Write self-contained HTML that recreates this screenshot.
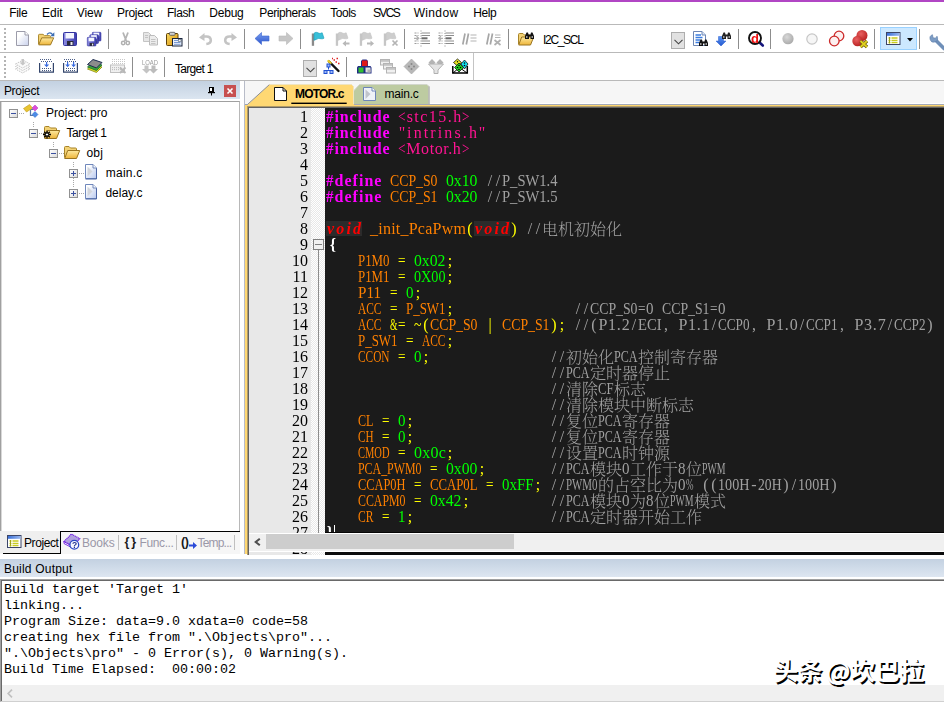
<!DOCTYPE html>
<html lang="zh"><head><meta charset="utf-8"><title>uVision</title><style>
*{margin:0;padding:0;box-sizing:border-box}
html,body{width:944px;height:704px;overflow:hidden;background:#fff}
body{position:relative;font-family:"Liberation Sans","Noto Sans CJK SC",sans-serif;font-size:12px;color:#000}
.a{position:absolute}
.ui{position:absolute;white-space:pre;font-size:12px;line-height:14px}
.sep{position:absolute;width:1px;background:#8d8d8d}
.hl{position:absolute;height:1px}
.t{position:absolute;white-space:pre;font:16px/16px "Liberation Serif",serif;height:16px;transform-origin:0 0}
.tb{font-weight:bold}
.tk{font-weight:bold;font-style:italic;background:#2b2b2b;height:15px}
.c{position:absolute;white-space:pre;font:300 16px/16px "Noto Serif CJK SC",serif;height:16px}
.ln{position:absolute;white-space:pre;font:16px/16px "Liberation Serif",serif;height:16px;right:636px;color:#000;text-align:right}
.bo{position:absolute;left:4px;white-space:pre;font:13.333px/16px "Liberation Mono",monospace;color:#000}
svg{position:absolute;overflow:visible}
.s0{transform:scaleX(0.938)}.s1{transform:scaleX(0.831)}.s2{transform:scaleX(0.861)}.s3{transform:scaleX(0.984)}.s4{transform:scaleX(0.911)}.s5{transform:scaleX(0.805)}.s6{transform:scaleX(0.886)}.s7{transform:scaleX(0.944)}.s8{transform:scaleX(0.714)}.s9{transform:scaleX(0.808)}.s10{transform:scaleX(0.603)}.s11{transform:scaleX(0.866)}.s12{transform:scaleX(0.912)}.s13{transform:scaleX(0.824)}.s14{transform:scaleX(0.709)}.s15{transform:scaleX(0.755)}.s16{transform:scaleX(0.792)}.s17{transform:scaleX(0.758)}.s18{transform:scaleX(0.697)}.s19{transform:scaleX(0.656)}.s20{transform:scaleX(0.744)}.s21{transform:scaleX(0.615)}.s22{transform:scaleX(0.774)}.s23{transform:scaleX(0.797)}.s24{transform:scaleX(0.932)}.s25{transform:scaleX(0.681)}.s26{transform:scaleX(0.563)}.s27{transform:scaleX(0.853)}.s28{transform:scaleX(0.742)}.s29{transform:scaleX(0.726)}
</style></head><body>
<div class="a" style="left:0;top:0;width:944px;height:2px;background:#b146c4"></div>
<div class="ui" style="left:9.3px;top:6px;letter-spacing:-0.36px">File</div>
<div class="ui" style="left:41.9px;top:6px;letter-spacing:0.03px">Edit</div>
<div class="ui" style="left:76.8px;top:6px;letter-spacing:-0.08px">View</div>
<div class="ui" style="left:117.1px;top:6px;letter-spacing:-0.32px">Project</div>
<div class="ui" style="left:166.9px;top:6px;letter-spacing:-0.37px">Flash</div>
<div class="ui" style="left:209.2px;top:6px;letter-spacing:-0.19px">Debug</div>
<div class="ui" style="left:259.3px;top:6px;letter-spacing:-0.40px">Peripherals</div>
<div class="ui" style="left:330.3px;top:6px;letter-spacing:-0.49px">Tools</div>
<div class="ui" style="left:372.9px;top:6px;letter-spacing:-1.57px">SVCS</div>
<div class="ui" style="left:413.7px;top:6px;letter-spacing:0.34px">Window</div>
<div class="ui" style="left:473.3px;top:6px;letter-spacing:-0.42px">Help</div>
<div class="hl" style="left:0;top:24px;width:944px;background:#b9b9b9"></div>
<div class="hl" style="left:0;top:52px;width:944px;background:#b9b9b9"></div>
<div class="hl" style="left:0;top:80px;width:944px;background:#b9b9b9"></div>
<div class="a" style="left:473px;top:53px;width:1px;height:27px;background:#c4c4c4"></div>
<div class="a" style="left:4px;top:28px;width:2px;height:22px;background:repeating-linear-gradient(to bottom,#b4b4b4 0 2px,transparent 2px 4px)"></div>
<div class="a" style="left:4px;top:56px;width:2px;height:22px;background:repeating-linear-gradient(to bottom,#b4b4b4 0 2px,transparent 2px 4px)"></div>
<div class="sep" style="left:108px;top:29px;height:20px"></div>
<div class="sep" style="left:188px;top:29px;height:20px"></div>
<div class="sep" style="left:244px;top:29px;height:20px"></div>
<div class="sep" style="left:300px;top:29px;height:20px"></div>
<div class="sep" style="left:404px;top:29px;height:20px"></div>
<div class="sep" style="left:508px;top:29px;height:20px"></div>
<div class="sep" style="left:738px;top:29px;height:20px"></div>
<div class="sep" style="left:770px;top:29px;height:20px"></div>
<div class="sep" style="left:874px;top:29px;height:20px"></div>
<div class="sep" style="left:919px;top:29px;height:20px"></div>
<div class="sep" style="left:132px;top:57px;height:20px"></div>
<div class="sep" style="left:164px;top:57px;height:20px"></div>
<div class="sep" style="left:346px;top:57px;height:20px"></div>
<div class="ui" style="left:174.9px;top:62px;letter-spacing:-0.69px">Target 1</div>
<div class="ui" style="left:543.0px;top:33px;letter-spacing:-1.31px">I2C_SCL</div>
<div class="a" style="left:303px;top:60px;width:14px;height:17px;background:#e1e1e1;border:1px solid #adadad"></div>
<svg style="left:305.5px;top:67px" width="9" height="6" viewBox="0 0 9 6"><path d="M0.5 0.8 L4.5 4.8 L8.5 0.8" fill="none" stroke="#444" stroke-width="1.1"/></svg>
<div class="a" style="left:671px;top:32px;width:14px;height:17px;background:#e1e1e1;border:1px solid #adadad"></div>
<svg style="left:673.5px;top:39px" width="9" height="6" viewBox="0 0 9 6"><path d="M0.5 0.8 L4.5 4.8 L8.5 0.8" fill="none" stroke="#444" stroke-width="1.1"/></svg>
<div class="a" style="left:880px;top:27px;width:37px;height:23px;background:#cce8ff;border:1px solid #99d1ff"></div>
<svg style="left:906.500px;top:38px" width="6" height="3.500" viewBox="0 0 6 3.500"><path d="M0 0H6L3 3.500Z" fill="#000"/></svg>
<div class="a" style="left:0;top:81px;width:240px;height:18px;background:linear-gradient(#c3d1e1,#dbe5f0)"></div>
<div class="ui" style="left:3.9px;top:84px;letter-spacing:-0.29px">Project</div>
<div class="a" style="left:224px;top:85px;width:12px;height:12px;background:#c75050"></div>
<svg style="left:227px;top:88px" width="6" height="6" viewBox="0 0 6 6"><path d="M0.5 0.5L5.5 5.5M5.5 0.5L0.5 5.5" stroke="#fff" stroke-width="1.6"/></svg>
<svg style="left:207px;top:86px" width="9" height="10" viewBox="0 0 9 10"><rect x="2.500" y="1.500" width="4" height="4" fill="#fff" stroke="#000"/><rect x="5" y="1" width="2" height="5" fill="#000"/><rect x="1" y="6" width="7" height="1.200" fill="#000"/><rect x="4" y="7" width="1" height="2.500" fill="#000"/></svg>
<div class="a" style="left:0;top:101px;width:240px;height:430px;border:1px solid #a0a0a0;border-bottom:none;border-right-color:#b8b8b8;background:#fff"></div>
<div class="a" style="left:1px;top:102px;width:1px;height:429px;background:#d8d8d8"></div>
<div class="a" style="left:9px;top:109px;width:9px;height:9px;border:1px solid #919191;background:linear-gradient(135deg,#fff,#dcdcdc)"></div>
<div class="a" style="left:11px;top:113px;width:5px;height:1px;background:#3a50a0"></div>
<div class="ui" style="left:46.0px;top:106px;letter-spacing:0.01px">Project: pro</div>
<div class="a" style="left:29px;top:129px;width:9px;height:9px;border:1px solid #919191;background:linear-gradient(135deg,#fff,#dcdcdc)"></div>
<div class="a" style="left:31px;top:133px;width:5px;height:1px;background:#3a50a0"></div>
<div class="ui" style="left:66.5px;top:126px;letter-spacing:-0.42px">Target 1</div>
<div class="a" style="left:49px;top:149px;width:9px;height:9px;border:1px solid #919191;background:linear-gradient(135deg,#fff,#dcdcdc)"></div>
<div class="a" style="left:51px;top:153px;width:5px;height:1px;background:#3a50a0"></div>
<div class="ui" style="left:86.4px;top:146px;letter-spacing:0.30px">obj</div>
<div class="a" style="left:69px;top:169px;width:9px;height:9px;border:1px solid #919191;background:linear-gradient(135deg,#fff,#dcdcdc)"></div>
<div class="a" style="left:71px;top:173px;width:5px;height:1px;background:#3a50a0"></div>
<div class="a" style="left:73px;top:171px;width:1px;height:5px;background:#3a50a0"></div>
<div class="ui" style="left:105.8px;top:166px;letter-spacing:0.21px">main.c</div>
<div class="a" style="left:69px;top:189px;width:9px;height:9px;border:1px solid #919191;background:linear-gradient(135deg,#fff,#dcdcdc)"></div>
<div class="a" style="left:71px;top:193px;width:5px;height:1px;background:#3a50a0"></div>
<div class="a" style="left:73px;top:191px;width:1px;height:5px;background:#3a50a0"></div>
<div class="ui" style="left:105.4px;top:186px;letter-spacing:0.01px">delay.c</div>
<div class="a" style="left:19px;top:113px;width:5px;height:1px;background:repeating-linear-gradient(to right,#a8a8a8 0 1px,transparent 1px 2px)"></div>
<div class="a" style="left:39px;top:133px;width:5px;height:1px;background:repeating-linear-gradient(to right,#a8a8a8 0 1px,transparent 1px 2px)"></div>
<div class="a" style="left:59px;top:153px;width:5px;height:1px;background:repeating-linear-gradient(to right,#a8a8a8 0 1px,transparent 1px 2px)"></div>
<div class="a" style="left:79px;top:173px;width:5px;height:1px;background:repeating-linear-gradient(to right,#a8a8a8 0 1px,transparent 1px 2px)"></div>
<div class="a" style="left:79px;top:193px;width:5px;height:1px;background:repeating-linear-gradient(to right,#a8a8a8 0 1px,transparent 1px 2px)"></div>
<div class="a" style="left:33px;top:122px;width:1px;height:6px;background:repeating-linear-gradient(to bottom,#a8a8a8 0 1px,transparent 1px 2px)"></div>
<div class="a" style="left:53px;top:142px;width:1px;height:6px;background:repeating-linear-gradient(to bottom,#a8a8a8 0 1px,transparent 1px 2px)"></div>
<div class="a" style="left:73px;top:162px;width:1px;height:6px;background:repeating-linear-gradient(to bottom,#a8a8a8 0 1px,transparent 1px 2px)"></div>
<div class="a" style="left:73px;top:178px;width:1px;height:10px;background:repeating-linear-gradient(to bottom,#a8a8a8 0 1px,transparent 1px 2px)"></div>
<div class="a" style="left:0;top:531px;width:240px;height:23px;background:#f6f6f6"></div>
<div class="a" style="left:0;top:531px;width:60px;height:22px;background:#efefef"></div>
<div class="a" style="left:60px;top:531px;width:180px;height:1px;background:#000"></div>
<div class="a" style="left:60px;top:531px;width:1px;height:23px;background:#000"></div>
<div class="a" style="left:3px;top:553px;width:58px;height:1px;background:#000"></div>
<div class="ui" style="left:24.0px;top:536px;letter-spacing:-0.41px">Project</div>
<div class="ui" style="left:82.0px;top:536px;letter-spacing:-0.17px;color:#9a98a8">Books</div>
<div class="ui" style="left:139.5px;top:536px;letter-spacing:-0.38px;color:#9a98a8">Func...</div>
<div class="ui" style="left:197.5px;top:536px;letter-spacing:-0.81px;color:#9a98a8">Temp...</div>
<div class="a" style="left:118px;top:535px;width:1px;height:15px;background:#c0c0c0"></div>
<div class="a" style="left:176px;top:535px;width:1px;height:15px;background:#c0c0c0"></div>
<div class="a" style="left:234px;top:535px;width:1px;height:15px;background:#c0c0c0"></div>
<div class="ui" style="left:124.500px;top:535px;font-size:12.500px;font-weight:bold;letter-spacing:1.800px;color:#1a1a1a">{}</div>
<div class="ui" style="left:181px;top:535px;font-size:12.500px;font-weight:bold;letter-spacing:-0.500px;color:#1a1a1a">()</div>
<svg style="left:189px;top:542px" width="8" height="7" viewBox="0 0 8 7"><path d="M0 2.5h4v-2.5l4 3.5l-4 3.5v-2.5h-4z" fill="#2a4ad8"/></svg>
<div class="a" style="left:245px;top:81px;width:699px;height:24px;background:#f6f6f6"></div>
<div class="a" style="left:244px;top:81px;width:1px;height:474px;background:#b8bcc8"></div>
<svg style="left:245px;top:81px" width="200" height="26" viewBox="0 0 200 26"><path d="M108.500 23.500V10L114.500 3.500H182L184 5.500V23.500Z" fill="#bdcba1" stroke="#d2d6cc" stroke-width="1"/><path d="M184 5.500V23.500" stroke="#b4b4b4" stroke-width="1.400"/><path d="M2.500 24L24.500 3.500H106.500L108.500 5.500V24Z" fill="#ffd873"/><path d="M2.500 23.500L24.500 3.500" fill="none" stroke="#8e8e8e" stroke-width="1"/><path d="M24.500 3.500H106.500L108.500 5.500V23" fill="none" stroke="#efe4c0" stroke-width="1"/><path d="M29.500 6.500h8.500l3.500 3.500v9.500h-12z" fill="#fff" stroke="#111" stroke-width="1"/><path d="M38 6.500v3.500h3.500" fill="none" stroke="#111" stroke-width="1"/><path d="M118.500 6.500h8.500l3.500 3.500v9.500h-12z" fill="#eef2f8" stroke="#6c84b8" stroke-width="1"/><path d="M127 6.500v3.500h3.500" fill="#fff" stroke="#6c84b8" stroke-width="1"/><path d="M120.500 8.500L125.500 13L120.500 18z" fill="#c0c4cc"/><rect x="46.300" y="21.600" width="55.400" height="1.500" fill="#000"/></svg>
<div class="ui" style="left:295.0px;top:87px;letter-spacing:-0.82px;font-weight:bold">MOTOR.c</div>
<div class="ui" style="left:384.5px;top:87px;letter-spacing:-0.22px">main.c</div>
<div class="a" style="left:245px;top:104px;width:699px;height:450px;background:#ffd873"></div>
<div class="a" style="left:430px;top:103px;width:514px;height:1px;background:#fff"></div>
<div class="a" style="left:354px;top:104px;width:590px;height:1px;background:#a4aab8"></div>
<div class="a" style="left:245px;top:104px;width:3px;height:1px;background:#9aa2b4"></div>
<div class="a" style="left:247px;top:106px;width:697px;height:449px;background:#b09a66"></div>
<div class="a" style="left:248px;top:107px;width:696px;height:448px;background:#636363"></div>
<div class="a" style="left:249px;top:108px;width:62px;height:447px;background:#e8e8e8"></div>
<div class="a" style="left:311px;top:108px;width:14px;height:447px;background:repeating-conic-gradient(#fff 0 25%,#e8e8e8 0 50%) 0 0/2px 2px"></div>
<div class="a" style="left:325px;top:108px;width:619px;height:447px;background:#1b1b1b"></div>
<div class="a" style="left:318px;top:250px;width:1px;height:283px;background:#8c8c8c"></div>
<div class="a" style="left:313px;top:239px;width:11px;height:11px;border:1px solid #808080;background:#f1f1f1"></div>
<div class="a" style="left:315px;top:244px;width:7px;height:1px;background:#808080"></div>
<div class="a" style="left:0;top:0;width:944px;height:555px;overflow:hidden;will-change:transform"><div class="ln" style="top:109px">1</div><span class="t tb s0" style="left:326.3px;top:109px;color:#ff00ff">#</span><span class="t tb" style="left:334.4px;top:109px;color:#ff00ff;letter-spacing:0.89px">include</span><span class="t s1" style="left:398.3px;top:109px;color:#ff1493">&lt;</span><span class="t" style="left:406.7px;top:109px;color:#ff1493;letter-spacing:1.46px">stc15.h</span><span class="t s1" style="left:462.3px;top:109px;color:#ff1493">&gt;</span><div class="ln" style="top:125px">2</div><span class="t tb s0" style="left:326.3px;top:125px;color:#ff00ff">#</span><span class="t tb" style="left:334.4px;top:125px;color:#ff00ff;letter-spacing:0.89px">include</span><span class="t" style="left:398.7px;top:125px;color:#ff1493;letter-spacing:1.47px">&quot;</span><span class="t" style="left:407.1px;top:125px;color:#ff1493;letter-spacing:2.12px">intrins.h</span><span class="t" style="left:478.7px;top:125px;color:#ff1493;letter-spacing:1.47px">&quot;</span><div class="ln" style="top:141px">3</div><span class="t tb s0" style="left:326.3px;top:141px;color:#ff00ff">#</span><span class="t tb" style="left:334.4px;top:141px;color:#ff00ff;letter-spacing:0.89px">include</span><span class="t s1" style="left:398.3px;top:141px;color:#ff1493">&lt;</span><span class="t" style="left:406.3px;top:141px;color:#ff1493;letter-spacing:0.57px">Motor.h</span><span class="t s1" style="left:462.3px;top:141px;color:#ff1493">&gt;</span><div class="ln" style="top:157px">4</div><div class="ln" style="top:173px">5</div><span class="t tb s0" style="left:326.3px;top:173px;color:#ff00ff">#</span><span class="t tb" style="left:334.5px;top:173px;color:#ff00ff;letter-spacing:1.04px">define</span><span class="t s2" style="left:390.3px;top:173px;color:#ff8000">CCP_S0</span><span class="t s3" style="left:446.3px;top:173px;color:#00ff00">0x10</span><span class="t" style="left:487.8px;top:173px;color:#a0a0a0;letter-spacing:3.55px">//</span><span class="t s4" style="left:502.3px;top:173px;color:#a0a0a0">P_SW1.4</span><div class="ln" style="top:189px">6</div><span class="t tb s0" style="left:326.3px;top:189px;color:#ff00ff">#</span><span class="t tb" style="left:334.5px;top:189px;color:#ff00ff;letter-spacing:1.04px">define</span><span class="t s2" style="left:390.3px;top:189px;color:#ff8000">CCP_S1</span><span class="t s3" style="left:446.3px;top:189px;color:#00ff00">0x20</span><span class="t" style="left:487.8px;top:189px;color:#a0a0a0;letter-spacing:3.55px">//</span><span class="t s4" style="left:502.3px;top:189px;color:#a0a0a0">P_SW1.5</span><div class="ln" style="top:205px">7</div><div class="ln" style="top:221px">8</div><span class="t tk" style="left:326px;top:221px;color:#ff0000;letter-spacing:2.11px;padding-left:1.1px;width:36px">void</span><span class="t" style="left:370.1px;top:221px;color:#ff8000;letter-spacing:0.22px">_init_PcaPwm</span><span class="t" style="left:467.3px;top:221px;color:#ffff00;letter-spacing:2.67px">(</span><span class="t tk" style="left:474px;top:221px;color:#ff0000;letter-spacing:2.11px;padding-left:1.1px;width:36px">void</span><span class="t" style="left:511.3px;top:221px;color:#ffff00;letter-spacing:2.67px">)</span><span class="t" style="left:527.8px;top:221px;color:#a0a0a0;letter-spacing:3.55px">//</span><span class="c" style="left:542px;top:221px;color:#a0a0a0">电机初始化</span><div class="ln" style="top:237px">9</div><span class="t tb" style="left:329.8px;top:237px;color:#ffffff;letter-spacing:1.70px">{</span><div class="ln" style="top:253px">10</div><span class="t s5" style="left:358.3px;top:253px;color:#ff8000">P1M0</span><span class="t s1" style="left:398.3px;top:253px;color:#ffff00">=</span><span class="t s3" style="left:414.3px;top:253px;color:#00ff00">0x02</span><span class="t" style="left:447.8px;top:253px;color:#ffff00;letter-spacing:3.55px">;</span><div class="ln" style="top:269px">11</div><span class="t s5" style="left:358.3px;top:269px;color:#ff8000">P1M1</span><span class="t s1" style="left:398.3px;top:269px;color:#ffff00">=</span><span class="t s6" style="left:414.3px;top:269px;color:#00ff00">0X00</span><span class="t" style="left:447.8px;top:269px;color:#ffff00;letter-spacing:3.55px">;</span><div class="ln" style="top:285px">12</div><span class="t s7" style="left:358.3px;top:285px;color:#ff8000">P11</span><span class="t s1" style="left:390.3px;top:285px;color:#ffff00">=</span><span class="t s0" style="left:406.3px;top:285px;color:#00ff00">0</span><span class="t" style="left:415.8px;top:285px;color:#ffff00;letter-spacing:3.55px">;</span><div class="ln" style="top:301px">13</div><span class="t s8" style="left:358.3px;top:301px;color:#ff8000">ACC</span><span class="t s1" style="left:390.3px;top:301px;color:#ffff00">=</span><span class="t s9" style="left:406.3px;top:301px;color:#ff8000">P_SW1</span><span class="t" style="left:447.8px;top:301px;color:#ffff00;letter-spacing:3.55px">;</span><span class="t" style="left:575.8px;top:301px;color:#a0a0a0;letter-spacing:3.55px">//</span><span class="t s2" style="left:590.3px;top:301px;color:#a0a0a0">CCP_S0</span><span class="t s1" style="left:638.3px;top:301px;color:#a0a0a0">=</span><span class="t s0" style="left:646.3px;top:301px;color:#a0a0a0">0</span><span class="t s2" style="left:662.3px;top:301px;color:#a0a0a0">CCP_S1</span><span class="t s1" style="left:710.3px;top:301px;color:#a0a0a0">=</span><span class="t s0" style="left:718.3px;top:301px;color:#a0a0a0">0</span><div class="ln" style="top:317px">14</div><span class="t s8" style="left:358.3px;top:317px;color:#ff8000">ACC</span><span class="t s10" style="left:390.3px;top:317px;color:#ffff00">&amp;</span><span class="t s1" style="left:398.3px;top:317px;color:#ffff00">=</span><span class="t s11" style="left:414.3px;top:317px;color:#ffff00">~</span><span class="t" style="left:423.3px;top:317px;color:#ffff00;letter-spacing:2.67px">(</span><span class="t s2" style="left:430.3px;top:317px;color:#ff8000">CCP_S0</span><span class="t" style="left:488.4px;top:317px;color:#ffff00;letter-spacing:4.80px">|</span><span class="t s2" style="left:502.3px;top:317px;color:#ff8000">CCP_S1</span><span class="t" style="left:551.3px;top:317px;color:#ffff00;letter-spacing:2.67px">)</span><span class="t" style="left:559.8px;top:317px;color:#ffff00;letter-spacing:3.55px">;</span><span class="t" style="left:575.8px;top:317px;color:#a0a0a0;letter-spacing:3.55px">//</span><span class="t" style="left:591.3px;top:317px;color:#a0a0a0;letter-spacing:2.67px">(</span><span class="t" style="left:598.4px;top:317px;color:#a0a0a0;letter-spacing:0.78px">P1.2</span><span class="t" style="left:631.8px;top:317px;color:#a0a0a0;letter-spacing:3.55px">/</span><span class="t s12" style="left:638.3px;top:317px;color:#a0a0a0">ECI</span><span class="t" style="left:664.0px;top:317px;color:#a0a0a0;letter-spacing:4.00px">,</span><span class="t" style="left:678.4px;top:317px;color:#a0a0a0;letter-spacing:0.78px">P1.1</span><span class="t" style="left:711.8px;top:317px;color:#a0a0a0;letter-spacing:3.55px">/</span><span class="t s13" style="left:718.3px;top:317px;color:#a0a0a0">CCP0</span><span class="t" style="left:752.0px;top:317px;color:#a0a0a0;letter-spacing:4.00px">,</span><span class="t" style="left:766.4px;top:317px;color:#a0a0a0;letter-spacing:0.78px">P1.0</span><span class="t" style="left:799.8px;top:317px;color:#a0a0a0;letter-spacing:3.55px">/</span><span class="t s13" style="left:806.3px;top:317px;color:#a0a0a0">CCP1</span><span class="t" style="left:840.0px;top:317px;color:#a0a0a0;letter-spacing:4.00px">,</span><span class="t" style="left:854.4px;top:317px;color:#a0a0a0;letter-spacing:0.78px">P3.7</span><span class="t" style="left:887.8px;top:317px;color:#a0a0a0;letter-spacing:3.55px">/</span><span class="t s13" style="left:894.3px;top:317px;color:#a0a0a0">CCP2</span><span class="t" style="left:927.3px;top:317px;color:#a0a0a0;letter-spacing:2.67px">)</span><div class="ln" style="top:333px">15</div><span class="t s9" style="left:358.3px;top:333px;color:#ff8000">P_SW1</span><span class="t s1" style="left:406.3px;top:333px;color:#ffff00">=</span><span class="t s8" style="left:422.3px;top:333px;color:#ff8000">ACC</span><span class="t" style="left:447.8px;top:333px;color:#ffff00;letter-spacing:3.55px">;</span><div class="ln" style="top:349px">16</div><span class="t s14" style="left:358.3px;top:349px;color:#ff8000">CCON</span><span class="t s1" style="left:398.3px;top:349px;color:#ffff00">=</span><span class="t s0" style="left:414.3px;top:349px;color:#00ff00">0</span><span class="t" style="left:423.8px;top:349px;color:#ffff00;letter-spacing:3.55px">;</span><span class="t" style="left:551.8px;top:349px;color:#a0a0a0;letter-spacing:3.55px">//</span><span class="c" style="left:566px;top:349px;color:#a0a0a0">初始化</span><span class="t s15" style="left:614.3px;top:349px;color:#a0a0a0">PCA</span><span class="c" style="left:638px;top:349px;color:#a0a0a0">控制寄存器</span><div class="ln" style="top:365px">17</div><span class="t" style="left:551.8px;top:365px;color:#a0a0a0;letter-spacing:3.55px">//</span><span class="t s15" style="left:566.3px;top:365px;color:#a0a0a0">PCA</span><span class="c" style="left:590px;top:365px;color:#a0a0a0">定时器停止</span><div class="ln" style="top:381px">18</div><span class="t" style="left:551.8px;top:381px;color:#a0a0a0;letter-spacing:3.55px">//</span><span class="c" style="left:566px;top:381px;color:#a0a0a0">清除</span><span class="t s16" style="left:598.3px;top:381px;color:#a0a0a0">CF</span><span class="c" style="left:614px;top:381px;color:#a0a0a0">标志</span><div class="ln" style="top:397px">19</div><span class="t" style="left:551.8px;top:397px;color:#a0a0a0;letter-spacing:3.55px">//</span><span class="c" style="left:566px;top:397px;color:#a0a0a0">清除模块中断标志</span><div class="ln" style="top:413px">20</div><span class="t s17" style="left:358.3px;top:413px;color:#ff8000">CL</span><span class="t s1" style="left:382.3px;top:413px;color:#ffff00">=</span><span class="t s0" style="left:398.3px;top:413px;color:#00ff00">0</span><span class="t" style="left:407.8px;top:413px;color:#ffff00;letter-spacing:3.55px">;</span><span class="t" style="left:551.8px;top:413px;color:#a0a0a0;letter-spacing:3.55px">//</span><span class="c" style="left:566px;top:413px;color:#a0a0a0">复位</span><span class="t s15" style="left:598.3px;top:413px;color:#a0a0a0">PCA</span><span class="c" style="left:622px;top:413px;color:#a0a0a0">寄存器</span><div class="ln" style="top:429px">21</div><span class="t s18" style="left:358.3px;top:429px;color:#ff8000">CH</span><span class="t s1" style="left:382.3px;top:429px;color:#ffff00">=</span><span class="t s0" style="left:398.3px;top:429px;color:#00ff00">0</span><span class="t" style="left:407.8px;top:429px;color:#ffff00;letter-spacing:3.55px">;</span><span class="t" style="left:551.8px;top:429px;color:#a0a0a0;letter-spacing:3.55px">//</span><span class="c" style="left:566px;top:429px;color:#a0a0a0">复位</span><span class="t s15" style="left:598.3px;top:429px;color:#a0a0a0">PCA</span><span class="c" style="left:622px;top:429px;color:#a0a0a0">寄存器</span><div class="ln" style="top:445px">22</div><span class="t s19" style="left:358.3px;top:445px;color:#ff8000">CMOD</span><span class="t s1" style="left:398.3px;top:445px;color:#ffff00">=</span><span class="t" style="left:414.1px;top:445px;color:#00ff00;letter-spacing:0.22px">0x0c</span><span class="t" style="left:447.8px;top:445px;color:#ffff00;letter-spacing:3.55px">;</span><span class="t" style="left:551.8px;top:445px;color:#a0a0a0;letter-spacing:3.55px">//</span><span class="c" style="left:566px;top:445px;color:#a0a0a0">设置</span><span class="t s15" style="left:598.3px;top:445px;color:#a0a0a0">PCA</span><span class="c" style="left:622px;top:445px;color:#a0a0a0">时钟源</span><div class="ln" style="top:461px">23</div><span class="t s20" style="left:358.3px;top:461px;color:#ff8000">PCA_PWM0</span><span class="t s1" style="left:430.3px;top:461px;color:#ffff00">=</span><span class="t s3" style="left:446.3px;top:461px;color:#00ff00">0x00</span><span class="t" style="left:479.8px;top:461px;color:#ffff00;letter-spacing:3.55px">;</span><span class="t" style="left:551.8px;top:461px;color:#a0a0a0;letter-spacing:3.55px">//</span><span class="t s15" style="left:566.3px;top:461px;color:#a0a0a0">PCA</span><span class="c" style="left:590px;top:461px;color:#a0a0a0">模块</span><span class="t s0" style="left:622.3px;top:461px;color:#a0a0a0">0</span><span class="c" style="left:630px;top:461px;color:#a0a0a0">工作于</span><span class="t s0" style="left:678.3px;top:461px;color:#a0a0a0">8</span><span class="c" style="left:686px;top:461px;color:#a0a0a0">位</span><span class="t s21" style="left:702.3px;top:461px;color:#a0a0a0">PWM</span><div class="ln" style="top:477px">24</div><span class="t s22" style="left:358.3px;top:477px;color:#ff8000">CCAP0H</span><span class="t s1" style="left:414.3px;top:477px;color:#ffff00">=</span><span class="t s23" style="left:430.3px;top:477px;color:#ff8000">CCAP0L</span><span class="t s1" style="left:486.3px;top:477px;color:#ffff00">=</span><span class="t s24" style="left:502.3px;top:477px;color:#00ff00">0xFF</span><span class="t" style="left:535.8px;top:477px;color:#ffff00;letter-spacing:3.55px">;</span><span class="t" style="left:551.8px;top:477px;color:#a0a0a0;letter-spacing:3.55px">//</span><span class="t s25" style="left:566.3px;top:477px;color:#a0a0a0">PWM0</span><span class="c" style="left:598px;top:477px;color:#a0a0a0">的占空比为</span><span class="t s0" style="left:678.3px;top:477px;color:#a0a0a0">0</span><span class="t s26" style="left:686.3px;top:477px;color:#a0a0a0">%</span><span class="t" style="left:703.3px;top:477px;color:#a0a0a0;letter-spacing:2.67px">(</span><span class="t" style="left:711.3px;top:477px;color:#a0a0a0;letter-spacing:2.67px">(</span><span class="t s6" style="left:718.3px;top:477px;color:#a0a0a0">100H</span><span class="t" style="left:751.3px;top:477px;color:#a0a0a0;letter-spacing:2.67px">-</span><span class="t s27" style="left:758.3px;top:477px;color:#a0a0a0">20H</span><span class="t" style="left:783.3px;top:477px;color:#a0a0a0;letter-spacing:2.67px">)</span><span class="t" style="left:791.8px;top:477px;color:#a0a0a0;letter-spacing:3.55px">/</span><span class="t s6" style="left:798.3px;top:477px;color:#a0a0a0">100H</span><span class="t" style="left:831.3px;top:477px;color:#a0a0a0;letter-spacing:2.67px">)</span><div class="ln" style="top:493px">25</div><span class="t s28" style="left:358.3px;top:493px;color:#ff8000">CCAPM0</span><span class="t s1" style="left:414.3px;top:493px;color:#ffff00">=</span><span class="t s3" style="left:430.3px;top:493px;color:#00ff00">0x42</span><span class="t" style="left:463.8px;top:493px;color:#ffff00;letter-spacing:3.55px">;</span><span class="t" style="left:551.8px;top:493px;color:#a0a0a0;letter-spacing:3.55px">//</span><span class="t s15" style="left:566.3px;top:493px;color:#a0a0a0">PCA</span><span class="c" style="left:590px;top:493px;color:#a0a0a0">模块</span><span class="t s0" style="left:622.3px;top:493px;color:#a0a0a0">0</span><span class="c" style="left:630px;top:493px;color:#a0a0a0">为</span><span class="t s0" style="left:646.3px;top:493px;color:#a0a0a0">8</span><span class="c" style="left:654px;top:493px;color:#a0a0a0">位</span><span class="t s21" style="left:670.3px;top:493px;color:#a0a0a0">PWM</span><span class="c" style="left:694px;top:493px;color:#a0a0a0">模式</span><div class="ln" style="top:509px">26</div><span class="t s29" style="left:358.3px;top:509px;color:#ff8000">CR</span><span class="t s1" style="left:382.3px;top:509px;color:#ffff00">=</span><span class="t s0" style="left:398.3px;top:509px;color:#00ff00">1</span><span class="t" style="left:407.8px;top:509px;color:#ffff00;letter-spacing:3.55px">;</span><span class="t" style="left:551.8px;top:509px;color:#a0a0a0;letter-spacing:3.55px">//</span><span class="t s15" style="left:566.3px;top:509px;color:#a0a0a0">PCA</span><span class="c" style="left:590px;top:509px;color:#a0a0a0">定时器开始工作</span><div class="ln" style="top:525px">27</div><span class="t tb" style="left:326.8px;top:525px;color:#ffffff;letter-spacing:1.70px">}</span><div class="ln" style="top:541px">28</div></div>
<div class="a" style="left:334px;top:525px;width:1px;height:9px;background:#fff"></div>
<div class="a" style="left:325px;top:532px;width:619px;height:1px;background:#060606"></div>
<div class="a" style="left:325px;top:552px;width:619px;height:3px;background:#0b0b0b"></div>
<div class="a" style="left:249px;top:533px;width:695px;height:19px;background:#fff"></div>
<div class="a" style="left:249px;top:534px;width:695px;height:17px;background:#f0f0f0"></div>
<div class="a" style="left:266px;top:534px;width:248px;height:15px;background:#cdcdcd"></div>
<svg style="left:254px;top:537.5px" width="7" height="8" viewBox="0 0 7 8"><path d="M5.800 0.700L1.700 4L5.800 7.300" fill="none" stroke="#505050" stroke-width="2.100"/></svg>
<div class="a" style="left:240px;top:555px;width:704px;height:4px;background:#fff"></div>
<div class="a" style="left:0;top:554px;width:245px;height:5px;background:#fff"></div>
<div class="a" style="left:0;top:559px;width:944px;height:18px;background:linear-gradient(#c3d1e1,#dde6f1)"></div>
<div class="ui" style="left:4.0px;top:562px;letter-spacing:0.20px">Build Output</div>
<div class="a" style="left:0;top:579px;width:944px;height:123px;border:1px solid #a0a0a0;border-right:none;border-bottom-color:#d0d0d0;background:#fff"></div>
<div class="a" style="left:1px;top:580px;width:943px;height:121px;border:1px solid #696969;border-right:none;border-bottom:none"></div>
<div class="bo" style="top:582px">Build target &#x27;Target 1&#x27;</div>
<div class="bo" style="top:598px">linking...</div>
<div class="bo" style="top:614px">Program Size: data=9.0 xdata=0 code=58</div>
<div class="bo" style="top:630px">creating hex file from &quot;.\Objects\pro&quot;...</div>
<div class="bo" style="top:646px">&quot;.\Objects\pro&quot; - 0 Error(s), 0 Warning(s).</div>
<div class="bo" style="top:662px">Build Time Elapsed:  00:00:02</div>
<div class="a" style="left:2px;top:685px;width:942px;height:16px;background:#f0f0f0"></div>
<svg style="left:7px;top:689px" width="6" height="9" viewBox="0 0 6 9"><path d="M5 0.7L1.2 4.5L5 8.300" fill="none" stroke="#c0c0c0" stroke-width="1.7"/></svg>
<svg style="left:0;top:0" width="944" height="704" viewBox="0 0 944 704"><defs>
<linearGradient id="gd" x1="0" y1="0" x2="1" y2="1"><stop offset="0.3" stop-color="#fff"/><stop offset="1" stop-color="#c9d1ec"/></linearGradient>
<linearGradient id="gf" x1="0" y1="0" x2="0" y2="1"><stop offset="0" stop-color="#fde9a0"/><stop offset="1" stop-color="#eeb53a"/></linearGradient>
<linearGradient id="gs" x1="0" y1="0" x2="1" y2="0"><stop offset="0" stop-color="#8c8ce2"/><stop offset="1" stop-color="#3c3cae"/></linearGradient>
<linearGradient id="gp" x1="0" y1="0" x2="1" y2="1"><stop offset="0" stop-color="#f8d860"/><stop offset="1" stop-color="#d89410"/></linearGradient>
<linearGradient id="gb" x1="0" y1="0" x2="0" y2="1"><stop offset="0" stop-color="#7aa0f0"/><stop offset="1" stop-color="#2c54cc"/></linearGradient>
<linearGradient id="gbd" x1="0" y1="0" x2="0" y2="1"><stop offset="0" stop-color="#5a94f0"/><stop offset="1" stop-color="#2458d0"/></linearGradient>
<radialGradient id="gg" cx="0.4" cy="0.35" r="0.7"><stop offset="0" stop-color="#d8d8d8"/><stop offset="1" stop-color="#a8a8a8"/></radialGradient>
<radialGradient id="gr" cx="0.4" cy="0.35" r="0.7"><stop offset="0" stop-color="#e86060"/><stop offset="1" stop-color="#b82020"/></radialGradient>
<linearGradient id="gw" x1="0" y1="0" x2="1" y2="0"><stop offset="0" stop-color="#3a70d8"/><stop offset="1" stop-color="#9ab8f0"/></linearGradient>
<linearGradient id="gfile" x1="0" y1="0" x2="1" y2="1"><stop offset="0.2" stop-color="#fff"/><stop offset="1" stop-color="#b8c8ee"/></linearGradient>
</defs><g transform="translate(16,31)"><path d="M0.500 0.500h8.500l3.500 3.500v10.500h-12z" fill="url(#gd)" stroke="#9c9caa"/><path d="M9 0.500v3.500h3.500" fill="#fff" stroke="#9c9caa"/></g><g transform="translate(38,33)"><g transform="scale(1,.88)"><path d="M0.500 12.500V2.500q0-1 1-1h3.500l1.500 1.500h5q1 0 1 1V5" fill="#f3d274" stroke="#a88428"/><path d="M0.700 13.500L3.700 5.500h12l-3.200 8z" fill="url(#gf)" stroke="#9a7420"/></g><path d="M9 1.500q3-3.200 5.800 0.300" stroke="#3a6cb4" fill="none" stroke-width="1.300"/><path d="M16.300 -0.700v4h-4z" fill="#3a6cb4"/></g><g transform="translate(63,32)"><g transform="scale(1.0)"><rect x=".5" y=".5" width="13" height="13" rx="1" fill="url(#gs)" stroke="#3434a0"/><rect x="2.500" y="1" width="8.500" height="5.500" fill="#f4f6ff"/><rect x="4" y="9" width="6.500" height="4.500" fill="#2a2a3a"/><rect x="7.500" y="10" width="2" height="3" fill="#e8e8f0"/></g></g><g transform="translate(92,32)"><g transform="scale(0.66)"><rect x=".5" y=".5" width="13" height="13" rx="1" fill="url(#gs)" stroke="#3434a0"/><rect x="2.500" y="1" width="8.500" height="5.500" fill="#f4f6ff"/><rect x="4" y="9" width="6.500" height="4.500" fill="#2a2a3a"/><rect x="7.500" y="10" width="2" height="3" fill="#e8e8f0"/></g></g><g transform="translate(89.5,34.5)"><g transform="scale(0.66)"><rect x=".5" y=".5" width="13" height="13" rx="1" fill="url(#gs)" stroke="#3434a0"/><rect x="2.500" y="1" width="8.500" height="5.500" fill="#f4f6ff"/><rect x="4" y="9" width="6.500" height="4.500" fill="#2a2a3a"/><rect x="7.500" y="10" width="2" height="3" fill="#e8e8f0"/></g></g><g transform="translate(87,37)"><g transform="scale(0.66)"><rect x=".5" y=".5" width="13" height="13" rx="1" fill="url(#gs)" stroke="#3434a0"/><rect x="2.500" y="1" width="8.500" height="5.500" fill="#f4f6ff"/><rect x="4" y="9" width="6.500" height="4.500" fill="#2a2a3a"/><rect x="7.500" y="10" width="2" height="3" fill="#e8e8f0"/></g></g><g transform="translate(120,32)"><path d="M3 0.500L6.300 9M8 0.500L4.700 9" stroke="#b4b4b4" stroke-width="1.800" fill="none"/><circle cx="3.200" cy="11" r="1.700" fill="none" stroke="#b0b0b0" stroke-width="1.500"/><circle cx="7.800" cy="11" r="1.700" fill="none" stroke="#b0b0b0" stroke-width="1.500"/></g><g transform="translate(143,32)"><path d="M0.500 0.500h5l2.500 2.500v6.500h-7.500z" fill="#e6e6e6" stroke="#c4c4c4"/><path d="M6.500 3.500h5l3 3v6.500h-8z" fill="#ececec" stroke="#bcbcbc"/><path d="M8 7.500h4.500M8 9.500h4.500M8 11.500h4.500M2 3.500h3M2 5.500h3" stroke="#c4c4c4"/></g><g transform="translate(166,32)"><rect x="0.500" y="1.500" width="11.500" height="12" rx="1" fill="url(#gp)" stroke="#5c4008"/><rect x="3.500" y="0.300" width="5.500" height="3" rx=".8" fill="#d0d0d0" stroke="#505050" stroke-width=".8"/><rect x="6.500" y="6.500" width="9.500" height="7.500" fill="#eef3fc" stroke="#18243c"/><path d="M8 8.500h4M8 10.500h6.500M8 12.300h6.500" stroke="#7c9cd4"/><rect x="12.500" y="7.500" width="2.500" height="2" fill="#fff" stroke="#345" stroke-width=".5"/></g><g transform="translate(199,33)"><path d="M4 3.500h3.500q4.300 0 4.300 4q0 3-4.500 3.500" fill="none" stroke="#c4c4c4" stroke-width="2.600"/><path d="M0 4.500l5.500-4.500v8z" fill="#c4c4c4"/></g><g transform="translate(237,33) scale(-1,1)"><path d="M4 3.500h3.500q4.300 0 4.300 4q0 3-4.500 3.500" fill="none" stroke="#c4c4c4" stroke-width="2.600"/><path d="M0 4.500l5.500-4.500v8z" fill="#c4c4c4"/></g><g transform="translate(255,32.5)"><path d="M0 6l6.500-6v3.500h7.500v5h-7.500v3.500z" fill="url(#gb)" stroke="#3a64d0" stroke-width=".6"/></g><g transform="translate(293,32.5) scale(-1,1)"><path d="M0 6l6.500-6v3.500h7.500v5h-7.500v3.500z" fill="#c6c6c6" stroke="#bbb" stroke-width=".6"/></g><g transform="translate(311,32)"><rect x="0.800" y="1.500" width="2.300" height="12.300" fill="#8a8a8a"/><path d="M3 1.500C4.500 -0.500 6.500 0.500 8 1.300C9.500 1.800 10.500 0.800 11.200 0.800L13 6.200C11 7.500 9 6.300 7.500 6.500C6 6.800 4.500 8 3 8.300Z" fill="#39bfd8" stroke="#1a9ab6" stroke-width=".6"/></g><g transform="translate(335,32)"><rect x="0.800" y="1.500" width="2.300" height="12.300" fill="#c6c6c6"/><path d="M3 1.500C4.500 -0.500 6.500 0.500 8 1.300C9.500 1.800 10.500 0.800 11.200 0.800L13 6.200C11 7.500 9 6.300 7.500 6.500C6 6.800 4.500 8 3 8.300Z" fill="#cdcdcd" stroke="#c4c4c4" stroke-width=".6"/><path d="M14.500 11.500H10" stroke="#b8b8b8" stroke-width="2" fill="none"/><path d="M7.500 11.500l3.500-3v6z" fill="#b8b8b8"/></g><g transform="translate(359,32)"><rect x="0.800" y="1.500" width="2.300" height="12.300" fill="#c6c6c6"/><path d="M3 1.500C4.500 -0.500 6.500 0.500 8 1.300C9.500 1.800 10.500 0.800 11.200 0.800L13 6.200C11 7.500 9 6.300 7.500 6.500C6 6.800 4.500 8 3 8.300Z" fill="#cdcdcd" stroke="#c4c4c4" stroke-width=".6"/><path d="M8 11.500H12" stroke="#b8b8b8" stroke-width="2" fill="none"/><path d="M15 11.500l-3.500-3v6z" fill="#b8b8b8"/></g><g transform="translate(383,32)"><rect x="0.800" y="1.500" width="2.300" height="12.300" fill="#c6c6c6"/><path d="M3 1.500C4.500 -0.500 6.500 0.500 8 1.300C9.500 1.800 10.500 0.800 11.200 0.800L13 6.200C11 7.500 9 6.300 7.500 6.500C6 6.800 4.500 8 3 8.300Z" fill="#cdcdcd" stroke="#c4c4c4" stroke-width=".6"/><path d="M9.500 8.500l5 5M14.500 8.500l-5 5" stroke="#b4b4b4" stroke-width="1.700" fill="none"/></g><g transform="translate(414,30.5)"><path d="M7.500 2.500h8.500M7.500 5h8.500M7.500 10.500h8.500M7.500 13h8.500" stroke="#8c8c8c" stroke-width="1"/><path d="M7.500 7.800h6" stroke="#6c6c6c" stroke-width="2"/><path d="M7 0v16" stroke="#8c8c8c" stroke-width="1" stroke-dasharray="1 1.500"/><path d="M0.500 2.500h4M0.500 5h4M0.500 10.500h4M0.500 13h4" stroke="#9c9c9c" stroke-width="1" stroke-dasharray="2 1"/><path d="M0 7.800h4M2.500 5.800l2.300 2l-2.300 2" stroke="#b0b0b0" stroke-width="1.200" fill="none"/></g><g transform="translate(438,30.5)"><path d="M7.500 2.500h8.500M7.500 5h8.500M7.500 10.500h8.500M7.500 13h8.500" stroke="#8c8c8c" stroke-width="1"/><path d="M7.500 7.800h6" stroke="#6c6c6c" stroke-width="2"/><path d="M7 0v16" stroke="#8c8c8c" stroke-width="1" stroke-dasharray="1 1.500"/><path d="M0.500 2.500h4M0.500 5h4M0.500 10.500h4M0.500 13h4" stroke="#9c9c9c" stroke-width="1" stroke-dasharray="2 1"/><path d="M1 7.800h4M3 5.800l-2.300 2l2.300 2" stroke="#b0b0b0" stroke-width="1.200" fill="none"/></g><g transform="translate(462,33)"><path d="M3 0.500L0.800 11.500M6.500 0.500L4.300 11.500" stroke="#a6a6a6" stroke-width="1.700"/><path d="M8.500 2h6M8.500 5h6M8.500 8h6" stroke="#b4b4b4" stroke-width="1.200"/></g><g transform="translate(486,33)"><path d="M3 0.500L0.800 11.500M6.500 0.500L4.300 11.500" stroke="#a6a6a6" stroke-width="1.700"/><path d="M9 2h5.500M9 4.500h5.500" stroke="#b4b4b4" stroke-width="1.200"/><path d="M8.500 7l6 5M14.500 7l-6 5" stroke="#b0b0b0" stroke-width="1.700"/></g><g transform="translate(518,32.5)"><path d="M0.500 11.500V2q0-1 1-1h3.500l1.500 1.500h5v2" fill="#f3d274" stroke="#a88428"/><path d="M0.700 12.500L3.700 4.500h12l-3.200 8z" fill="url(#gf)" stroke="#9a7420"/></g><g transform="translate(524.5,31.5)"><path d="M0.500 7.500v-3l1.500-3.500h1.500l0.500 2h2l0.500-2h1.500l1.500 3.500v3h-3.500v-2.500h-1.500v2.500z" fill="#111"/><rect x="1.500" y="4.500" width="1.500" height="2" fill="#999"/><rect x="7" y="4.500" width="1.500" height="2" fill="#999"/></g><g transform="translate(693,31)"><path d="M0.500 0.500h8.500l3.500 3.500v10.500h-12z" fill="#fff" stroke="#6d86b4"/><path d="M9 0.500v3.500h3.500" fill="#dfe8f6" stroke="#6d86b4"/><path d="M2.500 4h5.500M2.500 6.500h7M2.500 9h5M2.500 11.500h4" stroke="#3a7ce0" stroke-width="1.300"/></g><g transform="translate(698.5,38.5)"><path d="M0.500 7.500v-3l1.500-3.500h1.500l0.500 2h2l0.500-2h1.500l1.500 3.500v3h-3.500v-2.500h-1.500v2.500z" fill="#111"/><rect x="1.500" y="4.500" width="1.500" height="2" fill="#999"/><rect x="7" y="4.500" width="1.500" height="2" fill="#999"/></g><g transform="translate(716,36.5)"><path d="M2.500 0h5v4.500h2.500l-5 5l-5-5h2.500z" fill="url(#gbd)" stroke="#2a5cd0" stroke-width=".5"/></g><g transform="translate(721.5,31.5)"><path d="M0.500 7.500v-3l1.500-3.500h1.500l0.500 2h2l0.500-2h1.500l1.500 3.500v3h-3.500v-2.500h-1.500v2.500z" fill="#222"/><rect x="1.500" y="4.500" width="1.500" height="2" fill="#999"/><rect x="7" y="4.500" width="1.500" height="2" fill="#999"/></g><g transform="translate(748,31)"><path d="M11 11l3.800 3.500" stroke="#15157c" stroke-width="2.600" stroke-linecap="round"/><circle cx="7" cy="7" r="6" fill="#fff" stroke="#111" stroke-width="1.900"/><text x="3" y="11.500" font-family="Liberation Sans,sans-serif" font-weight="bold" font-size="13" fill="#f01010">d</text></g><circle cx="788" cy="38.700" r="5.600" fill="url(#gg)"/><circle cx="812" cy="39" r="5.200" fill="#f6f6f6" stroke="#c6c6c6" stroke-width="1.200"/><circle cx="839" cy="36" r="4.800" fill="#fdf0f0" stroke="#cc2a2a" stroke-width="1.300"/><circle cx="834.3" cy="41" r="4.800" fill="#fdf0f0" stroke="#cc2a2a" stroke-width="1.300"/><circle cx="862" cy="35.500" r="5.500" fill="url(#gr)"/><circle cx="857.5" cy="41" r="5.200" fill="url(#gr)"/><path d="M860.500 41l6.500 6M867 41l-6.500 6" stroke="#6c5c08" stroke-width="3.400"/><path d="M860.500 41l6.500 6M867 41l-6.500 6" stroke="#e0d020" stroke-width="1.800"/><g transform="translate(886,32)"><rect x="0.500" y="0.500" width="13.500" height="12" fill="#fff" stroke="#3c4668"/><rect x="1" y="1" width="12.500" height="2.800" fill="url(#gw)"/><path d="M2.500 6h2M2.500 8.300h2M2.500 10.500h2M5.500 6h6M5.500 8.300h6M5.500 10.500h6" stroke="#c8cc20" stroke-width="1.300"/><path d="M3.500 5v6.500" stroke="#a0a418" stroke-width="1"/></g><g transform="translate(929,34)"><path d="M15 14.500L7 6.500" stroke="#6f8fb8" stroke-width="3.600" stroke-linecap="round"/><path d="M8.500 3.500a3.800 3.800 0 1 1-5-2.800l0.500 3l2.500 0.500l1.500-2z" fill="#7c9cc4" stroke="#5c7ca8" stroke-width=".6"/></g><g transform="translate(15,58.5)"><path d="M0.500 10.500l7.500-4l7 4l-7.500 4z" fill="#fafafa" stroke="#c4c4c4" stroke-width="1" stroke-dasharray="1.500 1"/><path d="M0.500 8l7.500-4l7 4l-7.500 4z" fill="#fafafa" stroke="#c4c4c4" stroke-width="1" stroke-dasharray="1.500 1"/><path d="M0.500 5.500l7.500-4l7 4l-7.500 4z" fill="#fafafa" stroke="#c4c4c4" stroke-width="1" stroke-dasharray="1.500 1"/><path d="M6.500 0.500h2.500v3.500h2l-3.200 3l-3.300-3h2z" fill="#c6c6c6"/></g><g transform="translate(39,58.5)"><rect x="1" y="0.5" width="1" height="1" fill="#4c5e88"/><rect x="3" y="0.5" width="1" height="1" fill="#4c5e88"/><rect x="5" y="0.5" width="1" height="1" fill="#4c5e88"/><rect x="7" y="0.5" width="1" height="1" fill="#4c5e88"/><rect x="9" y="0.5" width="1" height="1" fill="#4c5e88"/><rect x="11" y="0.5" width="1" height="1" fill="#4c5e88"/><rect x="2" y="2.5" width="1" height="1" fill="#4c5e88"/><rect x="4" y="2.5" width="1" height="1" fill="#4c5e88"/><rect x="6" y="2.5" width="1" height="1" fill="#4c5e88"/><rect x="8" y="2.5" width="1" height="1" fill="#4c5e88"/><rect x="10" y="2.5" width="1" height="1" fill="#4c5e88"/><rect x="12" y="2.5" width="1" height="1" fill="#4c5e88"/><path d="M0.600 4.500V13.700H14.400V4.500" fill="none" stroke="#33456c" stroke-width="1.200"/><rect x="3" y="9.5" width="1" height="1" fill="#46587f"/><rect x="5" y="9.5" width="1" height="1" fill="#46587f"/><rect x="7" y="9.5" width="1" height="1" fill="#46587f"/><rect x="9" y="9.5" width="1" height="1" fill="#46587f"/><rect x="11" y="9.5" width="1" height="1" fill="#46587f"/><rect x="3" y="11.5" width="1" height="1" fill="#46587f"/><rect x="5" y="11.5" width="1" height="1" fill="#46587f"/><rect x="7" y="11.5" width="1" height="1" fill="#46587f"/><rect x="9" y="11.5" width="1" height="1" fill="#46587f"/><rect x="11" y="11.5" width="1" height="1" fill="#46587f"/><path d="M7 3.500h1.200v2.500h2l-2.600 2.800l-2.600-2.800h2z" fill="#3a6ce0"/></g><g transform="translate(63,58.5)"><rect x="1" y="0.5" width="1" height="1" fill="#4c5e88"/><rect x="3" y="0.5" width="1" height="1" fill="#4c5e88"/><rect x="5" y="0.5" width="1" height="1" fill="#4c5e88"/><rect x="7" y="0.5" width="1" height="1" fill="#4c5e88"/><rect x="9" y="0.5" width="1" height="1" fill="#4c5e88"/><rect x="11" y="0.5" width="1" height="1" fill="#4c5e88"/><rect x="2" y="2.5" width="1" height="1" fill="#4c5e88"/><rect x="4" y="2.5" width="1" height="1" fill="#4c5e88"/><rect x="6" y="2.5" width="1" height="1" fill="#4c5e88"/><rect x="8" y="2.5" width="1" height="1" fill="#4c5e88"/><rect x="10" y="2.5" width="1" height="1" fill="#4c5e88"/><rect x="12" y="2.5" width="1" height="1" fill="#4c5e88"/><path d="M0.600 4.500V13.700H14.400V4.500" fill="none" stroke="#33456c" stroke-width="1.200"/><rect x="3" y="9.5" width="1" height="1" fill="#46587f"/><rect x="5" y="9.5" width="1" height="1" fill="#46587f"/><rect x="7" y="9.5" width="1" height="1" fill="#46587f"/><rect x="9" y="9.5" width="1" height="1" fill="#46587f"/><rect x="11" y="9.5" width="1" height="1" fill="#46587f"/><rect x="3" y="11.5" width="1" height="1" fill="#46587f"/><rect x="5" y="11.5" width="1" height="1" fill="#46587f"/><rect x="7" y="11.5" width="1" height="1" fill="#46587f"/><rect x="9" y="11.5" width="1" height="1" fill="#46587f"/><rect x="11" y="11.5" width="1" height="1" fill="#46587f"/><path d="M4 3.500h1.200v2.500h1.800l-2.400 2.800l-2.400-2.800h1.800z" fill="#3a6ce0"/><path d="M10 3.500h1.200v2.500h1.800l-2.400 2.800l-2.400-2.800h1.800z" fill="#3a6ce0"/></g><g transform="translate(87,59)"><path d="M0.500 5.500l5.500-5l9 3l-5.500 5.500z" fill="#dcdc28" stroke="#8c8c18" stroke-width=".8" transform="translate(0,4.500)"/><path d="M0.500 5.500l5.500-5l9 3l-5.500 5.500z" fill="#38a838" stroke="#1c6c2c" stroke-width=".8" transform="translate(0,2.500)"/><path d="M0.500 5.500l5.500-5l9 3l-5.500 5.500z" fill="#8c8c8c" stroke="#1c2c50" stroke-width="1" transform="translate(0,0)"/></g><g transform="translate(110,58.5)"><rect x="2" y="0.5" width="1" height="1" fill="#c8c8c8"/><rect x="4" y="0.5" width="1" height="1" fill="#c8c8c8"/><rect x="6" y="0.5" width="1" height="1" fill="#c8c8c8"/><rect x="8" y="0.5" width="1" height="1" fill="#c8c8c8"/><rect x="10" y="0.5" width="1" height="1" fill="#c8c8c8"/><rect x="12" y="0.5" width="1" height="1" fill="#c8c8c8"/><rect x="14" y="0.5" width="1" height="1" fill="#c8c8c8"/><rect x="2" y="2.5" width="1" height="1" fill="#c8c8c8"/><rect x="4" y="2.5" width="1" height="1" fill="#c8c8c8"/><rect x="6" y="2.5" width="1" height="1" fill="#c8c8c8"/><rect x="8" y="2.5" width="1" height="1" fill="#c8c8c8"/><rect x="10" y="2.5" width="1" height="1" fill="#c8c8c8"/><rect x="12" y="2.5" width="1" height="1" fill="#c8c8c8"/><rect x="14" y="2.5" width="1" height="1" fill="#c8c8c8"/><rect x="2" y="4.5" width="1" height="1" fill="#c8c8c8"/><rect x="4" y="4.5" width="1" height="1" fill="#c8c8c8"/><rect x="6" y="4.5" width="1" height="1" fill="#c8c8c8"/><rect x="8" y="4.5" width="1" height="1" fill="#c8c8c8"/><rect x="10" y="4.5" width="1" height="1" fill="#c8c8c8"/><rect x="12" y="4.5" width="1" height="1" fill="#c8c8c8"/><rect x="14" y="4.5" width="1" height="1" fill="#c8c8c8"/><rect x="0.500" y="6.500" width="14" height="7.500" fill="#f0f0f0" stroke="#c0c0c0"/><rect x="2" y="8.5" width="1" height="1.200" fill="#c0c0c0"/><rect x="4" y="8.5" width="1" height="1.200" fill="#c0c0c0"/><rect x="6" y="8.5" width="1" height="1.200" fill="#c0c0c0"/><rect x="8" y="8.5" width="1" height="1.200" fill="#c0c0c0"/><rect x="10" y="8.5" width="1" height="1.200" fill="#c0c0c0"/><rect x="2" y="10.5" width="1" height="1.200" fill="#c0c0c0"/><rect x="4" y="10.5" width="1" height="1.200" fill="#c0c0c0"/><rect x="6" y="10.5" width="1" height="1.200" fill="#c0c0c0"/><rect x="8" y="10.5" width="1" height="1.200" fill="#c0c0c0"/><rect x="10" y="10.5" width="1" height="1.200" fill="#c0c0c0"/><path d="M10 9l5.500 5.500M15.500 9l-5.500 5.500" stroke="#b8b8b8" stroke-width="1.800"/></g><g transform="translate(142,59)"><text x="0" y="5.500" font-family="Liberation Sans,sans-serif" font-size="6.500" fill="#9a9a9a" textLength="16" lengthAdjust="spacingAndGlyphs">LOAD</text><path d="M2.500 6.500h4v3.500h2.500l-4.500 4.500l-4.500-4.500h2.500z" fill="#c4c4c4"/><path d="M9.500 6.500h4v3.500h2.500l-4.500 4.500l-4.500-4.500h2.500z" fill="#bcbcbc"/></g><g transform="translate(323,58.5)"><path d="M6 3l9.500 9.500" stroke="#111" stroke-width="2.400" stroke-linecap="round"/><path d="M5.500 2.500l2 2" stroke="#e8c820" stroke-width="2.400" stroke-linecap="round"/><path d="M10.500 1.500h1.500M13.500 0h1.500M12.500 3.500h1.500M15 5h1.500M9 0h1" stroke="#e02020" stroke-width="1.500"/><path d="M5.500 8v3M2.500 14v-2h6v2" fill="none" stroke="#2050d0" stroke-width="1"/><rect x="4" y="5.500" width="3" height="3" fill="#9cb8f8" stroke="#2050d0"/><rect x="1" y="12" width="3" height="3" fill="#9cb8f8" stroke="#2050d0"/><rect x="7" y="12" width="3" height="3" fill="#9cb8f8" stroke="#2050d0"/></g><g transform="translate(357,59)"><path d="M4 7V2l1.500-1.500h4l1.500 1.500v5h2.500l1 1.500v6h-14.500v-6l1-1.500z" fill="#202c84"/><rect x="5" y="1.500" width="5.500" height="5.500" fill="#e01818"/><rect x="1.500" y="8.500" width="5" height="5" fill="#30c030"/><rect x="8.500" y="8.500" width="5" height="5" fill="#e4e4e4"/><rect x="10.500" y="10.500" width="3" height="3" fill="#b0b0b0"/></g><g transform="translate(380,59)"><rect x="0.500" y="0.500" width="9" height="5.500" fill="#f0f0f0" stroke="#b4b4b4"/><rect x="1" y="1" width="8" height="1.800" fill="#c4c4c4"/></g><g transform="translate(383,63)"><rect x="0.500" y="0.500" width="9" height="5.500" fill="#f0f0f0" stroke="#b4b4b4"/><rect x="1" y="1" width="8" height="1.800" fill="#c4c4c4"/></g><g transform="translate(386,67)"><rect x="0.500" y="0.500" width="9" height="5.500" fill="#f0f0f0" stroke="#b4b4b4"/><rect x="1" y="1" width="8" height="1.800" fill="#c4c4c4"/></g><g transform="translate(404,59)"><path d="M7.500 0l7.500 7.500l-7.500 7.500l-7.500-7.500z" fill="#b8b8b8" stroke="#a4a4a4" stroke-width=".6"/><circle cx="5" cy="7.500" r="1" fill="#888"/><circle cx="10" cy="7.500" r="1" fill="#888"/><circle cx="7.500" cy="5" r="1" fill="#888"/><circle cx="7.500" cy="10" r="1" fill="#888"/></g><g transform="translate(428,59)"><path d="M4 0l3.500 3.500l-3.500 3.500l-3.500-3.500zM12 0l3.500 3.500l-3.500 3.500l-3.500-3.500z" fill="#b4b4b4"/><path d="M0.500 5h15l-5.500 6v3.500h-4v-3.500z" fill="#e4e4e4" stroke="#b0b0b0"/></g><g transform="translate(452,59)"><path d="M0.800 7v7h14.500v-7" fill="#fff" stroke="#000" stroke-width="1.500"/><path d="M1 14l6.500-5.500l7.500 5.500" fill="none" stroke="#000" stroke-width="1"/><path d="M5.500 0l4 3.500l-4 3.500l-4-3.500z" fill="#e8e820" stroke="#111" stroke-width=".8"/><path d="M12.500 1l3.500 4l-3.500 5l-3.500-5z" fill="#10e0f0" stroke="#111" stroke-width=".8"/><path d="M7 4l4.500 4.500l-4.500 4.500l-4.500-4.500z" fill="#20d820" stroke="#111" stroke-width=".8"/><circle cx="5.500" cy="8.500" r=".8"/><circle cx="8.500" cy="8.500" r=".8"/><circle cx="7" cy="6.500" r=".8"/><circle cx="7" cy="10.500" r=".8"/><circle cx="12.500" cy="4" r=".8"/><circle cx="12.500" cy="6.500" r=".8"/><circle cx="5.500" cy="2.800" r=".7"/></g><g transform="translate(23,104)"><path d="M7.500 5.500v6h3M7.500 5.500h3" fill="none" stroke="#5878a8" stroke-width="1.200"/><path d="M0.500 4.500l6-4l3 3.500l-6 4z" fill="#e8c432" stroke="#c09818" stroke-width=".6"/><path d="M12 1l3 3l-3 3l-3-3z" fill="#dc4cdc" stroke="#b030b0" stroke-width=".5"/><path d="M12 7.500l3 3l-3 3l-3-3z" fill="#4c8ce8" stroke="#2c64c0" stroke-width=".5"/></g><g transform="translate(44,125)"><path d="M0.500 12.500V2.500q0-1 1-1h3.500l1.500 1.500h5q1 0 1 1V5" fill="#f3d274" stroke="#a88428"/><path d="M0.700 13.500L3.700 5.500h12l-3.200 8z" fill="url(#gf)" stroke="#9a7420"/><path d="M3 5.500v8M-1 9.500h8M0.200 6.700l5.600 5.600M5.800 6.700l-5.600 5.600" stroke="#000" stroke-width="1.300"/><circle cx="3" cy="9.500" r="1.600" fill="#fff" stroke="#000" stroke-width="1"/></g><g transform="translate(64,145)"><path d="M0.500 12.500V2.500q0-1 1-1h3.500l1.500 1.500h5q1 0 1 1V5" fill="#f3d274" stroke="#a88428"/><path d="M0.700 13.500L3.700 5.500h12l-3.200 8z" fill="url(#gf)" stroke="#9a7420"/></g><g transform="translate(85,164)"><path d="M0.500 0.500h7.500l3.500 3.500v10.500h-11z" fill="url(#gfile)" stroke="#7088bc"/><path d="M8 0.500v3.500h3.500" fill="#f4f7fe" stroke="#5c74ac" stroke-width=".8"/><path d="M0.500 15h11M11.500 4.500v10.500" stroke="#4a64a4" fill="none" stroke-width="1"/><path d="M2.500 2.500L7.500 7.500L2.500 12.500z" fill="#d2d5dc"/></g><g transform="translate(85,184)"><path d="M0.500 0.500h7.500l3.500 3.500v10.500h-11z" fill="url(#gfile)" stroke="#7088bc"/><path d="M8 0.500v3.500h3.500" fill="#f4f7fe" stroke="#5c74ac" stroke-width=".8"/><path d="M0.500 15h11M11.500 4.500v10.500" stroke="#4a64a4" fill="none" stroke-width="1"/><path d="M2.500 2.500L7.500 7.500L2.500 12.500z" fill="#d2d5dc"/></g><g transform="translate(7,535)"><rect x="0.500" y="0.500" width="13.500" height="12" fill="#fff" stroke="#3c4668"/><rect x="1" y="1" width="12.500" height="2.800" fill="url(#gw)"/><path d="M2.500 6h2M2.500 8.300h2M2.500 10.500h2M5.500 6h6M5.500 8.300h6M5.500 10.500h6" stroke="#c8cc20" stroke-width="1.300"/><path d="M3.500 5v6.500" stroke="#a0a418" stroke-width="1"/></g><g transform="translate(63,533)"><path d="M1 8.500L9.500 13V15L1 10.500Z" fill="#fff" stroke="#6a14e0" stroke-width=".9"/><path d="M1 8.500L8.400 1L16.800 5.700L9.500 13Z" fill="#b0a0de" stroke="#6a14e0" stroke-width="1.100" stroke-dasharray="1.200 .600"/><circle cx="11.300" cy="11.700" r="4.400" fill="#f6f8ff" stroke="#2a48c4" stroke-width="1.300"/><text x="9.100" y="14.700" font-family="Liberation Sans,sans-serif" font-weight="bold" font-size="8.500" fill="#24348c">?</text></g></svg>
<div class="a" style="left:773.400px;top:653.500px;font:700 24.600px/30px 'Noto Sans CJK SC',sans-serif;color:#fff;text-shadow:1.500px 1.500px 0 #000;white-space:pre;word-spacing:-2.5px">头条 @坎巴拉</div>
</body></html>
